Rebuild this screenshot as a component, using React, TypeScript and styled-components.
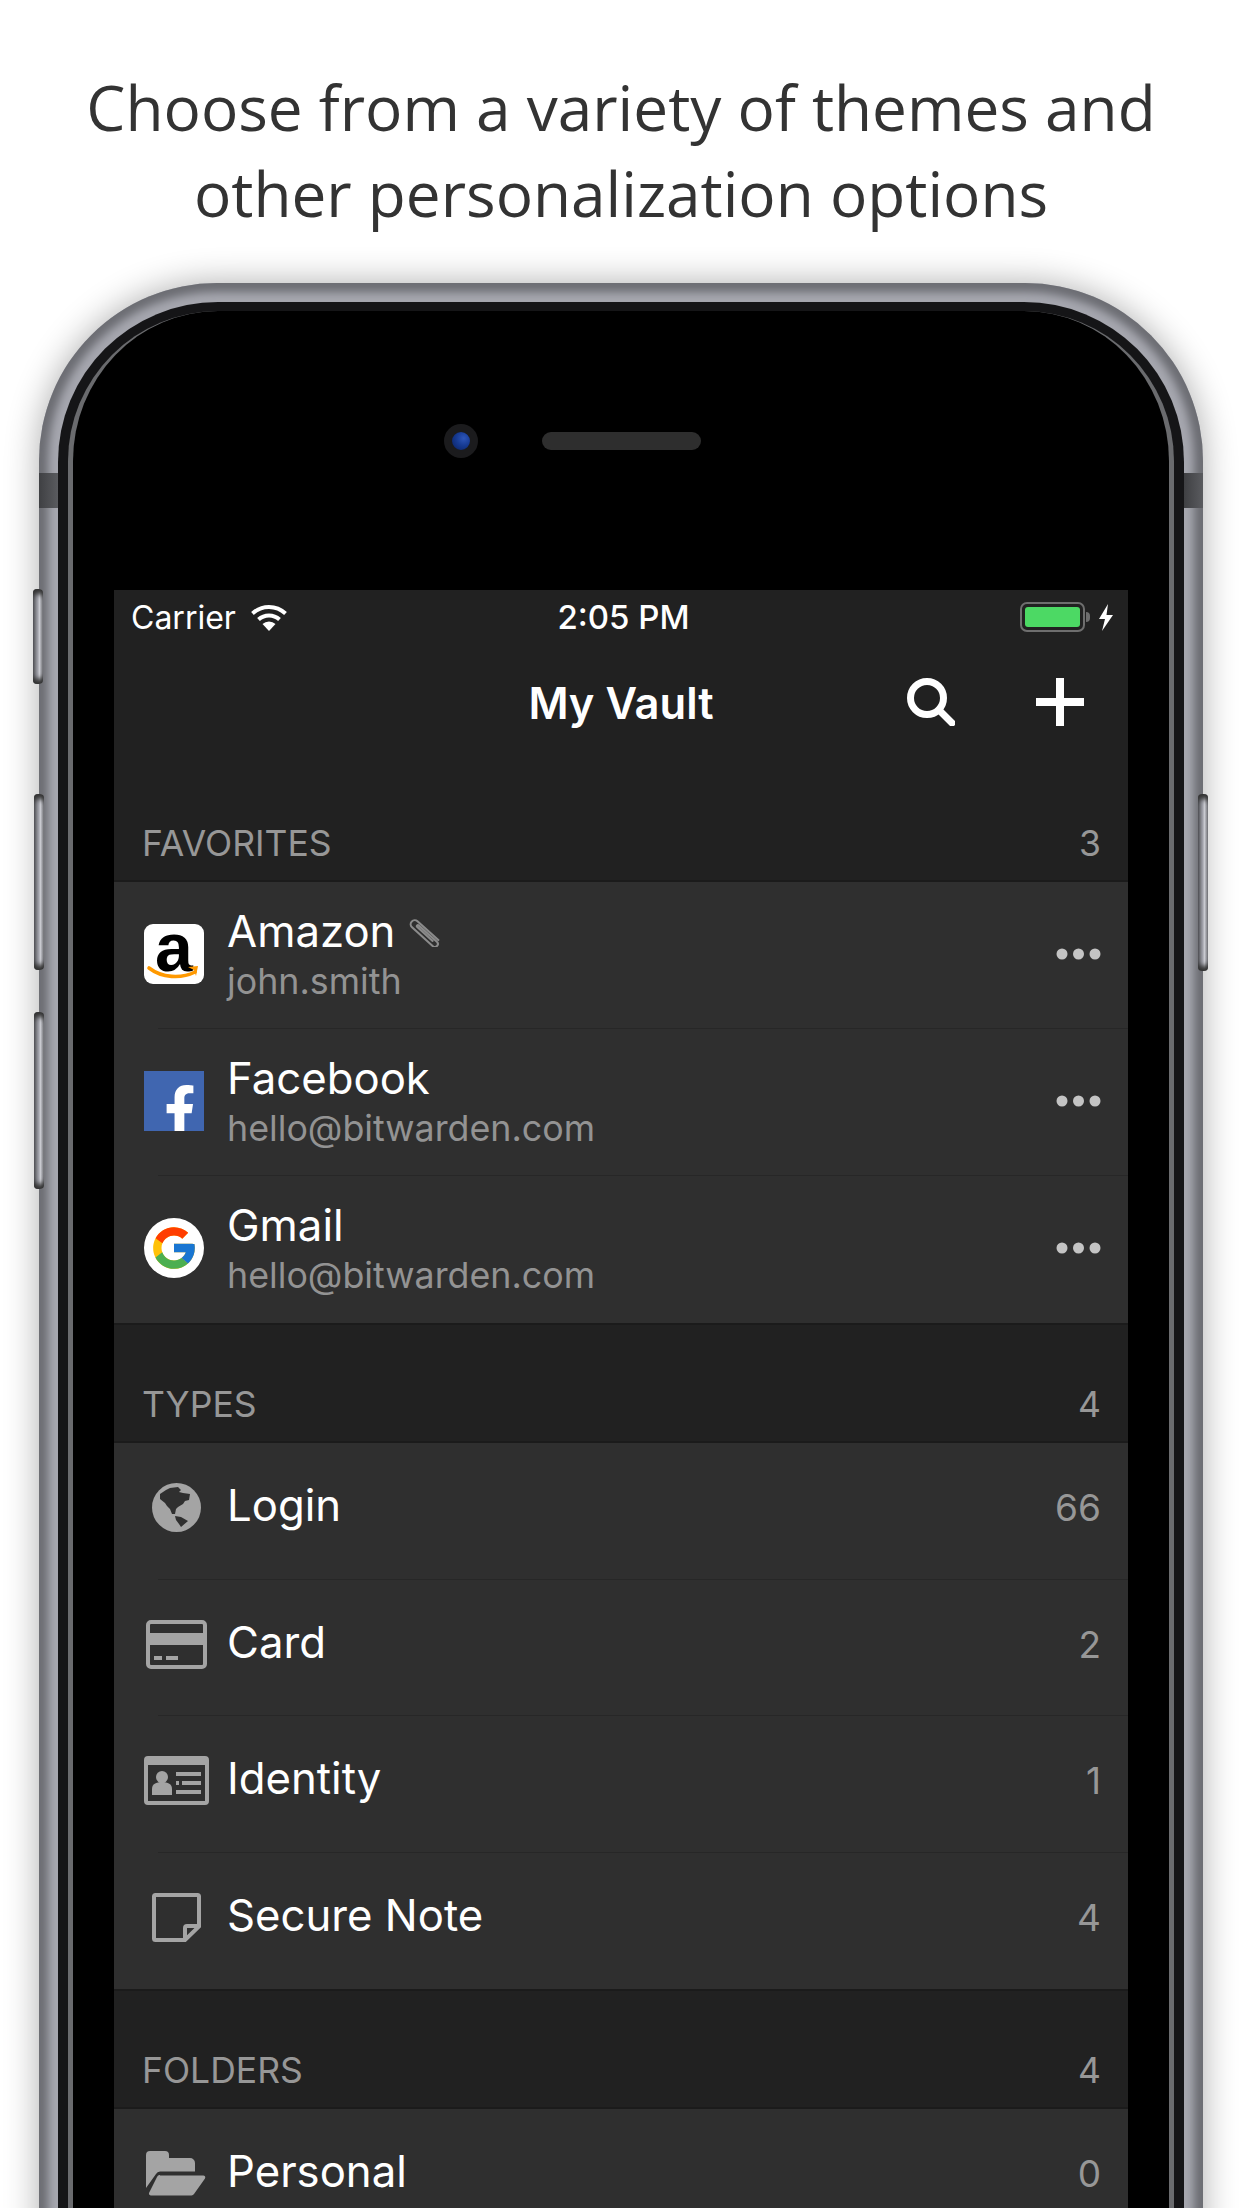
import React from 'react';
import styled, { createGlobalStyle } from 'styled-components';
import { FaFacebookF } from 'react-icons/fa';
import { FcGoogle } from 'react-icons/fc';

const UI_FONT = `Inter, "Liberation Sans", sans-serif`;

const GlobalStyle = createGlobalStyle`
  html, body {
    margin: 0;
    height: 2208px;
    overflow: hidden;
    background: #fff;
  }
`;

const favorites = [
  { name: 'Amazon', sub: 'john.smith', icon: 'amazon', clip: true },
  { name: 'Facebook', sub: 'hello@bitwarden.com', icon: 'facebook' },
  { name: 'Gmail', sub: 'hello@bitwarden.com', icon: 'google' },
];

const types = [
  { name: 'Login', count: 66, icon: 'globe' },
  { name: 'Card', count: 2, icon: 'card' },
  { name: 'Identity', count: 1, icon: 'identity' },
  { name: 'Secure Note', count: 4, icon: 'note' },
];

const ItemIcon = ({ name }: { name: string }) => {
  switch (name) {
    case 'amazon':
      return (
        <AmazonTile>
          <AmazonLetter>a</AmazonLetter>
          <AmazonSmile viewBox="0 0 60 18">
            <path d="M5 3c13 10 32 11 46 4" fill="none" stroke="#f90" strokeWidth="3.6" strokeLinecap="round" />
            <path d="M44 2l10-1-2 10-2-6z" fill="#f90" />
          </AmazonSmile>
        </AmazonTile>
      );
    case 'facebook':
      return (
        <FacebookTile>
          <FaFacebookF />
        </FacebookTile>
      );
    case 'google':
      return (
        <GoogleTile>
          <FcGoogle />
        </GoogleTile>
      );
    case 'globe':
      return (
        <svg width="49" height="49" viewBox="0 0 49 49">
          <circle cx="24.5" cy="24.5" r="24.5" fill="#a4a4a4" />
          <path
            d="M8 11l6-4 4-2 8-1 3 3-2 2 4 1 7 1-1 6-4 1-2 3-5 3-2 2-1 5h-3l-2-5-3-3-2-3-5-4z M23 33l6 1 7 4-7 6-2-3-3-4z"
            fill="#2f2f2f"
          />
        </svg>
      );
    case 'card':
      return (
        <svg width="61" height="49" viewBox="0 0 61 49">
          <rect x="2" y="2" width="57" height="45" rx="3" fill="none" stroke="#a4a4a4" strokeWidth="4" />
          <rect x="2" y="13" width="57" height="12" fill="#a4a4a4" />
          <rect x="8" y="36" width="8" height="4" fill="#a4a4a4" />
          <rect x="20" y="36" width="12" height="4" fill="#a4a4a4" />
        </svg>
      );
    case 'identity':
      return (
        <svg width="65" height="49" viewBox="0 0 65 49">
          <rect x="2" y="2" width="61" height="45" rx="2" fill="none" stroke="#a4a4a4" strokeWidth="4" />
          <rect x="2" y="2" width="61" height="7" fill="#a4a4a4" />
          <circle cx="18" cy="21" r="6" fill="#a4a4a4" />
          <path d="M8 39v-6c0-5 4-7 10-7s10 2 10 7v6z" fill="#a4a4a4" />
          <rect x="32" y="16" width="25" height="4" fill="#a4a4a4" />
          <rect x="38" y="25" width="19" height="4" fill="#a4a4a4" />
          <rect x="32" y="25" width="3" height="4" fill="#a4a4a4" />
          <rect x="32" y="34" width="25" height="4" fill="#a4a4a4" />
        </svg>
      );
    case 'note':
      return (
        <svg width="49" height="49" viewBox="0 0 49 49">
          <path
            d="M2 3.5a1.5 1.5 0 0 1 1.5-1.5h42a1.5 1.5 0 0 1 1.5 1.5v30L33 47H3.500a1.500 1.500 0 0 1-1.500-1.500z"
            fill="none"
            stroke="#a4a4a4"
            strokeWidth="4"
          />
          <path d="M33 47V35a2 2 0 0 1 2-2h12" fill="none" stroke="#a4a4a4" strokeWidth="4" />
        </svg>
      );
    default:
      return (
        <svg width="60" height="46" viewBox="0 0 60 46">
          <path
            d="M0 4a4 4 0 0 1 4-4h15a4 4 0 0 1 4 4v3h21a5 5 0 0 1 5 5v8.500H14a5 5 0 0 0-4 2.500L0 37z"
            fill="#a4a4a4"
          />
          <path d="M14 24.500h43a2 2 0 0 1 2 3L48 43a3 3 0 0 1-2.500 1.500H5a2 2 0 0 1-2-2.500l8-16a3 3 0 0 1 3-2z" fill="#a4a4a4" />
        </svg>
      );
  }
};

const Row = ({ icon, name, sub, clip, count }: { icon: string; name: string; sub?: string; clip?: boolean; count?: number }) => (
  <RowBox $tall={!!sub}>
    <IconSlot $tall={!!sub}>
      <ItemIcon name={icon} />
    </IconSlot>
    <RowText>
      <TitleLine>
        <RowTitle>{name}</RowTitle>
        {clip && (
          <ClipIcon viewBox="0 0 46 46">
            <g transform="translate(9 5) rotate(42)">
              <path
                d="M44 3H6a5.500 5.500 0 0 0 0 11h38a4 4 0 0 0 0-8H11a1.500 1.500 0 0 0 0 3h28"
                fill="none"
                stroke="#8b8b8b"
                strokeWidth="2.800"
                strokeLinecap="round"
              />
            </g>
          </ClipIcon>
        )}
      </TitleLine>
      {sub && <RowSub>{sub}</RowSub>}
    </RowText>
    {count !== undefined ? (
      <Count>{count}</Count>
    ) : (
      <Dots viewBox="0 0 45 12">
        <circle cx="6" cy="6" r="5.500" />
        <circle cx="22.500" cy="6" r="5.500" />
        <circle cx="39" cy="6" r="5.500" />
      </Dots>
    )}
  </RowBox>
);

export default function App() {
  return (
    <Page>
      <GlobalStyle />
      <Headline>
        Choose from a variety of themes and
        <br />
        other personalization options
      </Headline>
      <Shell>
        <SideButton $top={306} $height={95} $left={-6} />
        <SideButton $top={511} $height={176} $left={-5} />
        <SideButton $top={729} $height={177} $left={-5} />
        <SideButton $top={511} $height={177} $left={1159} />
        <AntennaBand $side="left" />
        <AntennaBand $side="right" />
        <Bezel>
          <Face>
            <Sensors>
              <Camera />
              <Speaker />
            </Sensors>
            <Screen>
              <StatusBar>
                <StatusLeft>
                  <span>Carrier</span>
                  <svg width="38" height="28" viewBox="0 0 37 28">
                    <path d="M2 10.500a24 24 0 0 1 33 0" fill="none" stroke="#fff" strokeWidth="4" />
                    <path d="M8 16.500a15.500 15.500 0 0 1 21 0" fill="none" stroke="#fff" strokeWidth="4" />
                    <path d="M18.500 28l-6.500-7a9.500 9.500 0 0 1 13 0z" fill="#fff" />
                  </svg>
                </StatusLeft>
                <StatusTime>2:05 PM</StatusTime>
                <StatusRight>
                  <Battery>
                    <BatteryFill />
                  </Battery>
                  <BatteryCap />
                  <svg width="16" height="27" viewBox="0 0 16 27">
                    <path d="M10 0L1 15h6l-3 12 11-16H8.500z" fill="#fff" />
                  </svg>
                </StatusRight>
              </StatusBar>
              <NavBar>
                <NavTitle>My Vault</NavTitle>
                <NavActions>
                  <svg width="48" height="48" viewBox="0 0 48 48">
                    <circle cx="20" cy="20" r="16.500" fill="none" stroke="#fff" strokeWidth="7" />
                    <path d="M32 32l13 13" stroke="#fff" strokeWidth="7" strokeLinecap="round" />
                  </svg>
                  <svg width="48" height="48" viewBox="0 0 48 48">
                    <path d="M24 0v48M0 24h48" stroke="#fff" strokeWidth="8" />
                  </svg>
                </NavActions>
              </NavBar>
              <SectionHeader $first>
                <span>FAVORITES</span>
                <span>3</span>
              </SectionHeader>
              <RowGroup>
                {favorites.map((f) => (
                  <Row key={f.name} {...f} />
                ))}
              </RowGroup>
              <SectionHeader>
                <span>TYPES</span>
                <span>4</span>
              </SectionHeader>
              <RowGroup>
                {types.map((t) => (
                  <Row key={t.name} {...t} />
                ))}
              </RowGroup>
              <SectionHeader>
                <span>FOLDERS</span>
                <span>4</span>
              </SectionHeader>
              <RowGroup>
                <Row icon="folder" name="Personal" count={0} />
              </RowGroup>
            </Screen>
          </Face>
        </Bezel>
      </Shell>
    </Page>
  );
}

const Page = styled.div`
  width: 1242px;
  height: 2208px;
  overflow: hidden;
  background: #fff;
  padding-top: 64px;
  box-sizing: border-box;
`;

const Headline = styled.h1`
  margin: 0 0 47px;
  text-align: center;
  font: 400 62.1px/86px 'Open Sans', sans-serif;
  color: #333;
`;

const Shell = styled.div`
  position: relative;
  margin: 0 39px;
  height: 2000px;
  padding: 19px 19px 0;
  box-sizing: border-box;
  border-radius: 178px 178px 0 0;
  background: #a6a7af;
  box-shadow: 0 0 34px rgba(0, 0, 0, 0.32), inset 0 0 8px 9px #6c6d73;
`;

const SideButton = styled.div<{ $top: number; $height: number; $left: number }>`
  position: absolute;
  top: ${(p) => p.$top}px;
  left: ${(p) => p.$left}px;
  width: 10px;
  height: ${(p) => p.$height}px;
  border-radius: 4px;
  background: linear-gradient(
    90deg,
    #55565b 0,
    #9d9ea6 45%,
    #c9cad0 65%,
    #7a7b81 100%
  );
  box-shadow: inset 0 8px 5px -3px #333, inset 0 -8px 5px -3px #333;
`;

const AntennaBand = styled.div<{ $side: 'left' | 'right' }>`
  position: absolute;
  top: 190px;
  ${(p) => p.$side}: 0;
  width: 19px;
  height: 35px;
  background: linear-gradient(90deg, #3f4043, #5a5b5f);
`;

const Bezel = styled.div`
  height: 100%;
  padding: 9px 10px 0;
  box-sizing: border-box;
  border-radius: 160px 160px 0 0;
  background: #151517;
`;

const Face = styled.div`
  height: 100%;
  box-sizing: border-box;
  padding: 113px 41px 0;
  border-radius: 150px 150px 0 0;
  background: #000;
  border: solid #6a6b6e;
  border-width: 0 5px;
`;

const Sensors = styled.div`
  display: grid;
  grid-template-columns: 1fr 159px 1fr;
  align-items: center;
  height: 34px;
  margin-bottom: 132px;
`;

const Camera = styled.div`
  justify-self: end;
  margin-right: 64px;
  width: 34px;
  height: 34px;
  border-radius: 50%;
  box-sizing: border-box;
  border: 8px solid #1b1b1d;
  background: radial-gradient(circle at 65% 35%, #2d55b8 0, #163a92 45%, #0a1f5c 100%);
`;

const Speaker = styled.div`
  height: 18px;
  border-radius: 9px;
  background: #2e2e2e;
`;

const Screen = styled.div`
  background: #212121;
  font-family: ${UI_FONT};
  color: #fff;
  height: 1700px;
`;

const StatusBar = styled.div`
  display: grid;
  grid-template-columns: 1fr auto 1fr;
  align-items: center;
  height: 54px;
  padding: 0 14px 0 17px;
  font-size: 32px;
`;

const StatusLeft = styled.div`
  display: flex;
  align-items: center;
  gap: 14px;
`;

const StatusTime = styled.div`
  font-size: 33px;
  font-weight: 500;
  padding-left: 2px;
`;

const StatusRight = styled.div`
  display: flex;
  align-items: center;
  justify-content: flex-end;
`;

const Battery = styled.div`
  width: 65px;
  height: 30px;
  box-sizing: border-box;
  padding: 3px;
  border: 2px solid #6e6e6e;
  border-radius: 7px;
`;

const BatteryFill = styled.div`
  height: 100%;
  border-radius: 3px;
  background: #4cd964;
`;

const BatteryCap = styled.div`
  width: 4px;
  height: 10px;
  margin: 0 8px 0 1px;
  border-radius: 0 4px 4px 0;
  background: #6e6e6e;
`;

const NavBar = styled.div`
  position: relative;
  display: flex;
  align-items: center;
  justify-content: center;
  height: 118px;
  padding-bottom: 1px;
  box-sizing: border-box;
`;

const NavTitle = styled.div`
  font-size: 43.5px;
  font-weight: 600;
`;

const NavActions = styled.div`
  position: absolute;
  top: 34px;
  right: 44px;
  display: flex;
  gap: 81px;
`;

const SectionHeader = styled.div<{ $first?: boolean }>`
  display: flex;
  justify-content: space-between;
  align-items: flex-end;
  height: ${(p) => (p.$first ? 120 : 118)}px;
  padding: 0 27px 16px 28px;
  box-sizing: border-box;
  font-size: 35.5px;
  line-height: 40px;
  color: #979797;
  border-bottom: 2px solid #1b1b1b;
`;

const RowGroup = styled.div`
  background: #2f2f2f;
  border-bottom: 2px solid #1b1b1b;
`;

const RowBox = styled.div<{ $tall: boolean }>`
  position: relative;
  display: flex;
  align-items: center;
  height: ${(p) => (p.$tall ? 147 : 136.5)}px;
  padding: 0 27px ${(p) => (p.$tall ? 3 : 7)}px 23px;
  box-sizing: border-box;

  &:not(:last-child)::after {
    content: '';
    position: absolute;
    left: 44px;
    right: 0;
    bottom: 0;
    height: 1px;
    background: #272727;
  }
`;

const IconSlot = styled.div<{ $tall: boolean }>`
  display: flex;
  align-items: center;
  justify-content: center;
  width: 74px;
  margin: 0 ${(p) => (p.$tall ? 16 : 14)}px 0 ${(p) => (p.$tall ? 0 : 2)}px;
  flex: none;
`;

const RowText = styled.div`
  flex: 1;
  min-width: 0;
  margin-bottom: 3px;
`;

const TitleLine = styled.div`
  display: flex;
  align-items: center;
  gap: 14px;
`;

const RowTitle = styled.div`
  font-size: 43.7px;
  line-height: 52px;
`;

const ClipIcon = styled.svg`
  width: 34px;
  height: 34px;
  margin-top: -4px;
`;

const RowSub = styled.div`
  font-size: 35.8px;
  line-height: 42px;
  margin: 2px 0 -2px;
  color: #939393;
`;

const Count = styled.div`
  font-size: 37px;
  color: #979797;
`;

const Dots = styled.svg`
  width: 45px;
  height: 12px;
  fill: #c4c4c4;
`;

const AmazonTile = styled.div`
  position: relative;
  width: 60px;
  height: 60px;
  border-radius: 9px;
  background: #fff;
  text-align: center;
`;

const AmazonLetter = styled.div`
  font: 700 68px/47px 'Liberation Sans', sans-serif;
  color: #000;
`;

const AmazonSmile = styled.svg`
  position: absolute;
  left: 0;
  bottom: 1px;
  width: 60px;
  height: 18px;
`;

const FacebookTile = styled.div`
  display: flex;
  align-items: flex-end;
  justify-content: center;
  width: 60px;
  height: 60px;
  padding-left: 12px;
  box-sizing: border-box;
  overflow: hidden;
  background: #4066b0;
  color: #fff;
  font-size: 50px;

  svg {
    margin-bottom: -4px;
  }
`;

const GoogleTile = styled.div`
  display: flex;
  align-items: center;
  justify-content: center;
  width: 60px;
  height: 60px;
  border-radius: 50%;
  background: #fff;
  font-size: 50px;
`;
